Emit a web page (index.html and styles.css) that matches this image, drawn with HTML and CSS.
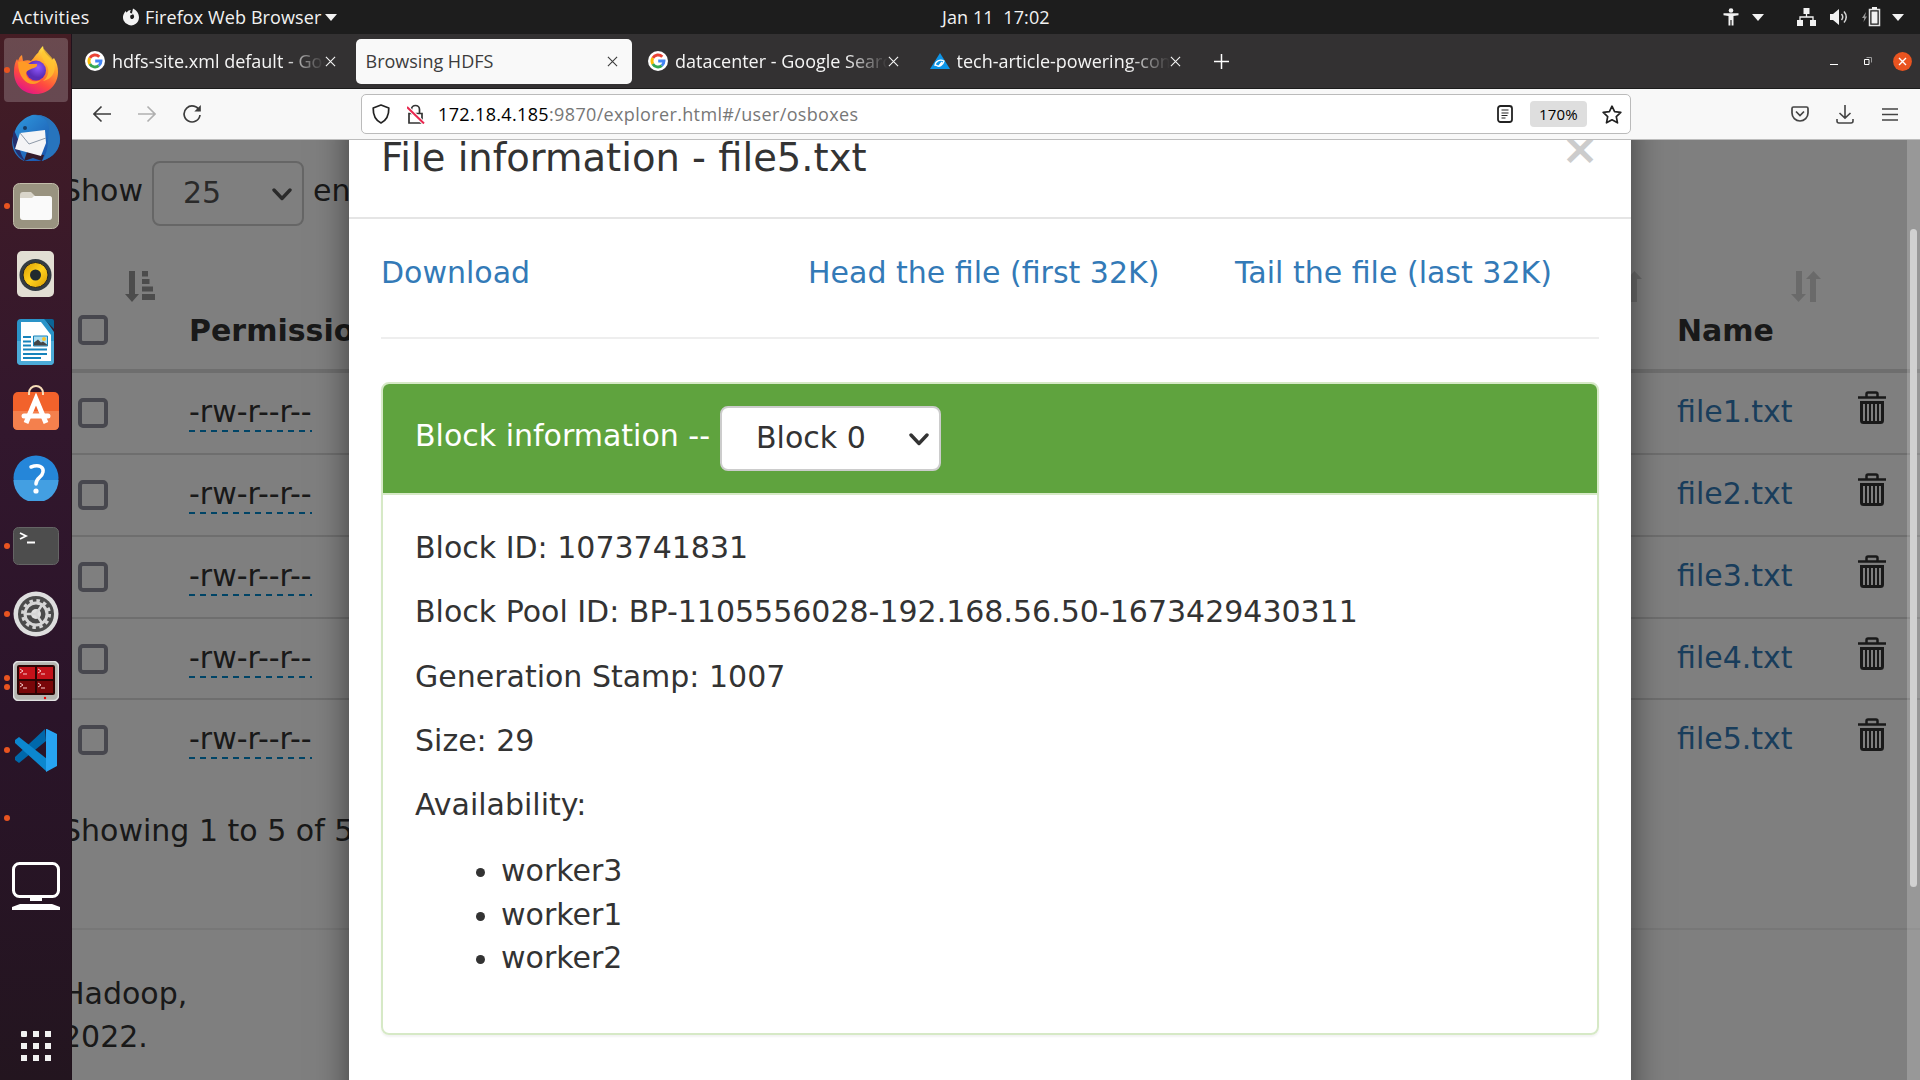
FILE: index.html
```html
<!DOCTYPE html>
<html lang="en">
<head>
<meta charset="utf-8">
<title>Browsing HDFS</title>
<link rel="stylesheet" href="styles.css">
</head>
<body>
<svg width="0" height="0" class="defs">
  <defs>
    <linearGradient id="fox" x1="0.8" y1="0" x2="0.3" y2="1"><stop offset="0" stop-color="#fff44f"/><stop offset=".35" stop-color="#ffa42b"/><stop offset=".7" stop-color="#ff4a3f"/><stop offset="1" stop-color="#e31587"/></linearGradient>
    <radialGradient id="orb" cx=".6" cy=".35"><stop offset="0" stop-color="#9059ff"/><stop offset="1" stop-color="#5b2cb5"/></radialGradient>
    <linearGradient id="bird" x1="0" y1="0" x2="1" y2="1"><stop offset="0" stop-color="#2f9be0"/><stop offset="1" stop-color="#1746a2"/></linearGradient>
    <linearGradient id="yel" x1="0" y1="0" x2="1" y2="1"><stop offset="0" stop-color="#d79a00"/><stop offset=".5" stop-color="#ffd21f"/><stop offset="1" stop-color="#d79a00"/></linearGradient>
    <symbol id="google" viewBox="0 0 20 20"><circle cx="10" cy="10" r="10" fill="#fff"/><g fill="none" stroke-width="2.9"><path d="M14.3 5.8A6 6 0 0 0 4.8 7" stroke="#ea4335"/><path d="M4.8 7a6 6 0 0 0 0 6" stroke="#fbbc05"/><path d="M4.8 13a6 6 0 0 0 9 1.6" stroke="#34a853"/><path d="M13.8 14.6A6 6 0 0 0 16 10h-5.8" stroke="#4285f4"/></g></symbol>
    <symbol id="x" viewBox="0 0 12 12"><path d="M1 1l10 10M11 1L1 11" stroke="currentColor" stroke-width="1.2" fill="none"/></symbol>
    <symbol id="tri" viewBox="0 0 12 7"><path d="M0 0h12L6 7z" fill="#f2f2f2"/></symbol>
    <symbol id="chev" viewBox="0 0 20 13"><path d="M2 2l8 8.5L18 2" fill="none" stroke="currentColor" stroke-width="3.4" stroke-linecap="round" stroke-linejoin="round"/></symbol>
    <symbol id="sort" viewBox="0 0 30 31"><path d="M5 0h6v23h4l-7.5 8L0 23h5zM19 31h6V8h5L22.500 0 15 8h4z" fill="#333"/></symbol>
    <symbol id="trash" viewBox="0 0 28 33"><path d="M0 6.500h28M8.500 6V3q0-1.500 1.500-1.500h8q1.500 0 1.500 1.500v3" fill="none" stroke="#333" stroke-width="2.500"/><path d="M3.500 11.500h21v18q0 2-2 2h-17q-2 0-2-2z" fill="none" stroke="#333" stroke-width="3"/><path d="M8 11v20M12 11v20M16 11v20M20 11v20" stroke="#333" stroke-width="2"/></symbol>
  </defs>
</svg>

<header class="topbar">
  <span class="activities">Activities</span>
  <svg class="app-icon" width="16" height="18" viewBox="0 0 16 18"><path d="M8 2c-1 1-1 2-.7 3l2.700.8c0 1-1.500 1.200-2.500 1.500C6.500 9.500 8 11.500 9.500 11c2-.8 2-3.300.8-4.500L9 5l1-4.500c3.500 1.500 6 5 6 9A8 8 0 1 1 1 5.500L2.500 3l1 1.500C5 2.800 6 2 8 2z" fill="#f2f2f2"/></svg>
  <span class="app-name">Firefox Web Browser</span>
  <svg width="12" height="7"><use href="#tri"/></svg>
  <span class="clock">Jan 11&nbsp; 17:02</span>
  <div class="status">
    <svg width="16" height="18" viewBox="0 0 16 18"><circle cx="8" cy="2.500" r="2.300" fill="#f2f2f2"/><path d="M.5 5.300h15v1.900L10.500 8v9.500H8.600V12H7.400v5.500H5.500V8L.5 7.200z" fill="#f2f2f2"/></svg>
    <svg class="t1" width="12" height="7"><use href="#tri"/></svg>
    <svg class="net" width="19" height="18" viewBox="0 0 19 18"><path d="M6.500 0h6v6h-6zM0 12h6v6H0zM13 12h6v6h-6z" fill="#f2f2f2"/><path d="M9.500 5v4M3 12V9h13v3" fill="none" stroke="#f2f2f2" stroke-width="1.300"/></svg>
    <svg class="vol" width="19" height="16" viewBox="0 0 19 16"><path d="M0 5h3l6-5v16l-6-5H0z" fill="#f2f2f2"/><path d="M11.500 5q2.500 3 0 6M14 2.500q4.500 5.500 0 11" fill="none" stroke="#d5d5d5" stroke-width="1.500"/></svg>
    <svg class="bat" width="19" height="20" viewBox="0 0 19 20"><path d="M4 5L0 11h2.200L1.500 15 5 9.500H3z" fill="#999"/><path d="M7.500 2.500h10v16h-10z" fill="none" stroke="#e5e5e5" stroke-width="1.500"/><path d="M10 0h5v2h-5zM9.500 4.500h6v12h-6z" fill="#f2f2f2"/></svg>
    <svg class="t1" width="12" height="7"><use href="#tri"/></svg>
  </div>
</header>

<div class="desktop">
<nav class="dock">
  <div class="app active"><i></i>
    <svg width="46" height="48" viewBox="0 0 46 48"><path d="M23 48C9 48 1 38 1 26c0-6 1-10 3-13l1 2c1-3 2-5 4-6l1 6c3-1 6-1 8 0 3-3 5-7 7-8 1-3 4-6 5-7 1 8 6 10 9 14l2-2c3 5 4 9 4 14 0 12-9 22-22 22z" fill="url(#fox)"/><circle cx="23" cy="24.500" r="10" fill="url(#orb)"/><path d="M5 16c5-2 8 0 11 2h8c1 3-3 4-6 5-2 1-5 2-5 5 2 7 9 9 15 6-7 9-23 3-23-18z" fill="#ff9a25"/><path d="M26 15c10 0 13 14 4 20 11-2 15-13 9-23L31 3c-4 5-2 9 1 13z" fill="#ffc630" opacity=".75"/></svg></div>
  <div class="app">
    <svg width="48" height="48" viewBox="0 0 48 48"><path d="M12 47C1 42-3 29 3 17 6 8 14 3 20 1c5 0 9 0 13 2 10 4 15 14 15 22 0 10-6 18-18 22z" fill="url(#bird)"/><path d="M2 16C-2 30 4 42 13 47c-4-6-6-12-5-17z" fill="#24306f"/><path d="M12 47l3-9 17 3-2 6-9-3z" fill="#341b2a"/><path d="M8 19l25-3 1 13-5 13L3 35z" fill="#f4f4f6"/><path d="M8 19l9 11 17-6" fill="none" stroke="#8e99a8"/><path d="M20 1c10-1 17 6 17 14-2 10 1 20-7 32 12-4 18-12 18-22C47 12 37-1 20 1z" fill="#2774bd"/><circle cx="13" cy="14" r="2" fill="#173b65"/></svg></div>
  <div class="app"><i></i>
    <svg width="46" height="46" viewBox="0 0 46 46"><rect x=".5" y=".5" width="45" height="45" rx="6" fill="#999380" stroke="#c3bdab"/><path d="M7 12q0-3 3-3h8l4 4h14q3 0 3 3H7z" fill="#d9d5ca"/><path d="M7 15h12l2-2h15q3 0 3 3v18q0 3-3 3H10q-3 0-3-3z" fill="#fafafa"/></svg></div>
  <div class="app">
    <svg width="37" height="46" viewBox="0 0 37 46"><rect width="37" height="46" rx="5" fill="#e2ded3"/><circle cx="18.500" cy="24" r="16" fill="#333b42"/><circle cx="18.500" cy="24" r="12.500" fill="url(#yel)"/><circle cx="18.500" cy="24" r="12.500" fill="none" stroke="#222"/><circle cx="18.500" cy="24" r="5.500" fill="#222a2e"/></svg></div>
  <div class="app">
    <svg width="37" height="46" viewBox="0 0 37 46"><path d="M4 0h24l9 13v29q0 4-4 4H4q-4 0-4-4V4q0-4 4-4z" fill="#2a93c8"/><path d="M0 22h37v20q0 4-4 4H4q-4 0-4-4z" fill="#4cabd8"/><path d="M27 0h8q2 0 2 2v8z" fill="#0b6496"/><path d="M4 3h20l10 13v26H4z" fill="#fff"/><path d="M6 18h8M6 22.500h8M6 26.500h8M6 30.500h24M6 35h24M6 39h18" stroke="#1783bb" stroke-width="2"/><path d="M16.500 17h14v10h-14z" fill="#a7dcf0" stroke="#1783bb"/><path d="M17 26.500v-3l4-3 3 3 2-1 4 3v1z" fill="#444"/><circle cx="27" cy="20" r="2" fill="#f8c42a"/></svg></div>
  <div class="app">
    <svg width="46" height="46" viewBox="0 0 46 46" class="bag"><rect y="8" width="46" height="38" rx="5" fill="#f2622b"/><path d="M0 27h46v14q0 5-5 5H5q-5 0-5-5z" fill="#f4804d"/><path d="M16 11V9a7 7 0 0 1 14 0v2" fill="none" stroke="#f7ddb8" stroke-width="2"/><path d="M13 39l10-24 10 24" fill="none" stroke="#fff" stroke-width="5"/><path d="M11 32h24" stroke="#fff" stroke-width="5" stroke-linecap="round"/></svg></div>
  <div class="app">
    <svg width="46" height="46" viewBox="0 0 46 46"><circle cx="23" cy="23" r="22.500" fill="#2586d9"/><path d="M.5 25h45A22.500 22.500 0 0 1 .5 25z" fill="#439fe2"/><path d="M18 12c8-3 13 0 12 5-1 6-7 5-7 12" fill="none" stroke="#fff" stroke-width="3.500" stroke-linecap="round"/><circle cx="23" cy="36" r="2.600" fill="#fff"/></svg></div>
  <div class="app"><i></i>
    <svg width="46" height="38" viewBox="0 0 46 38"><rect x=".5" y=".5" width="45" height="37" rx="5" fill="#4d4d4d" stroke="#656565"/><path d="M7 6l6 3-6 3M14 15.500h8" fill="none" stroke="#fff" stroke-width="1.800"/></svg></div>
  <div class="app"><i></i>
    <svg width="46" height="46" viewBox="0 0 46 46"><circle cx="23" cy="23" r="22.500" fill="#dedede"/><circle cx="23" cy="23" r="18" fill="#4b4b4b"/><circle cx="23" cy="23" r="13.500" fill="none" stroke="#d6d6d6" stroke-width="3" stroke-dasharray="3.500 3.570"/><circle cx="23" cy="23" r="11" fill="none" stroke="#d6d6d6" stroke-width="3"/><circle cx="23" cy="23" r="5" fill="#e0e0e0"/><path d="M23 23H12M23 23l6-9M23 23l6 9" stroke="#d6d6d6" stroke-width="2.500"/></svg></div>
  <div class="app"><i class="upper"></i><i class="lower"></i>
    <svg class="crt" width="46" height="40" viewBox="0 0 46 40"><rect x=".5" y=".5" width="45" height="39" rx="5" fill="#b5b5b0" stroke="#e2e2e2" stroke-width="1.500"/><rect x="4" y="4" width="38" height="30" rx="2" fill="#2c0505"/><path d="M6 6h16v12H6zM24 6h16v12H24z" fill="#c4121a"/><path d="M6 20h16v12H6zM24 20h16v12H24z" fill="#790709"/><path d="M7 8l3 2-3 2M10 13h4M25 8l3 2-3 2M28 13h4M7 22l3 2-3 2M10 27h4M25 22l3 2-3 2M28 27h4" fill="none" stroke="#f5caca"/><circle cx="32" cy="37" r="1.200" fill="#e00"/></svg></div>
  <div class="app"><i></i>
    <svg width="44" height="44" viewBox="0 0 44 44"><path d="M31 1L1 29v3l4 3L32 13z" fill="#0068aa"/><path d="M1 15v-3l4-3 28 22-1 12z" fill="#0c87cf"/><path d="M31 1l2 0 10 5v32l-11 6V1z" fill="#27a4f2"/></svg></div>
  <div class="app"><i></i></div>
  <div class="app">
    <svg width="48" height="48" viewBox="0 0 48 48"><rect x="1.500" y="1.500" width="45" height="33" rx="6" fill="none" stroke="#fff" stroke-width="3"/><path d="M18 35h12v4H18zM8 42h32l8 3v3H0v-3z" fill="#fff"/></svg></div>
  <svg class="grid" width="30" height="30" viewBox="0 0 30 30"><path d="M1 0h4q1 0 1 1v4q0 1-1 1H1q-1 0-1-1V1q0-1 1-1zM12 0h6v6h-6zM24 0h6v6h-6zM0 12h6v6H0zM12 12h6v6h-6zM24 12h6v6h-6zM0 24h6v6H0zM12 24h6v6h-6zM24 24h6v6h-6z" fill="#f2f2f2"/></svg>
</nav>

<main class="window">
  <div class="tabs">
    <div class="tab"><svg width="20" height="20"><use href="#google"/></svg><span>hdfs-site.xml default - Goo</span><svg class="close" width="11" height="11"><use href="#x"/></svg></div>
    <div class="tab selected"><span>Browsing HDFS</span><svg class="close" width="11" height="11"><use href="#x"/></svg></div>
    <div class="tab"><svg width="20" height="20"><use href="#google"/></svg><span>datacenter - Google Searc</span><svg class="close" width="11" height="11"><use href="#x"/></svg></div>
    <div class="tab"><svg width="20" height="20" viewBox="0 0 20 20"><path d="M10 2l10 16H0z" fill="#0d95e8"/><path d="M5 15c0-5 5-7 9-5-1 4-5 7-8 4M9 15l3-4" fill="none" stroke="#fff" stroke-width="1.300"/></svg><span>tech-article-powering-con</span><svg class="close" width="11" height="11"><use href="#x"/></svg></div>
    <svg class="plus" width="15" height="15" viewBox="0 0 15 15"><path d="M7.500 0v15M0 7.500h15" stroke="#fff" stroke-width="1.500"/></svg>
    <div class="controls">
      <svg width="8" height="9" viewBox="0 0 8 9"><path d="M0 7.500h8" stroke="#fff"/></svg>
      <svg width="8" height="8" viewBox="0 0 8 8"><path d="M.5 2.500h4.500v5H.5z" fill="none" stroke="#fff"/><path d="M2.500.5h5v5" fill="none" stroke="#999"/></svg>
      <svg width="19" height="19" viewBox="0 0 19 19"><circle cx="9.500" cy="9.500" r="9.400" fill="#e95420"/><path d="M6 6l7 7M13 6l-7 7" stroke="#fff" stroke-width="1.400"/></svg>
    </div>
  </div>

  <div class="toolbar">
    <div class="nav">
      <svg width="18" height="18" viewBox="0 0 18 18"><path d="M18 9H1M8.500 1.500L1 9l7.500 7.500" fill="none" stroke="#3c3c3c" stroke-width="1.600"/></svg>
      <svg width="18" height="18" viewBox="0 0 18 18"><path d="M0 9h17M9.500 1.500L17 9l-7.500 7.500" fill="none" stroke="#b0b0b0" stroke-width="1.600"/></svg>
      <svg width="18" height="18" viewBox="0 0 18 18"><path d="M16.500 6A8 8 0 1 0 17 10" fill="none" stroke="#3c3c3c" stroke-width="1.700"/><path d="M17.800 0v6.500h-6.500z" fill="#3c3c3c"/></svg>
    </div>
    <div class="urlbar">
      <svg width="18" height="20" viewBox="0 0 18 20"><path d="M9 1l7.800 3C17 11 15 16 9 19 3 16 1 11 1.200 4z" fill="none" stroke="#222" stroke-width="1.700" stroke-linejoin="round"/></svg>
      <svg class="lock" width="18" height="20" viewBox="0 0 18 20"><path d="M2 9.500h13v9.500H2zM4.500 9V5.500a4 4 0 0 1 8 0V9" fill="none" stroke="#333" stroke-width="1.700"/><path d="M0 3l17 16.500" stroke="#fff" stroke-width="4"/><path d="M0 3l17 16.500" stroke="#e8284f" stroke-width="2"/></svg>
      <span class="url"><b>172.18.4.185</b>:9870/explorer.html#/user/osboxes</span>
      <svg class="reader" width="16" height="18" viewBox="0 0 16 18"><rect x="1" y="1" width="14" height="16" rx="2.500" fill="none" stroke="#222" stroke-width="1.800"/><path d="M4.500 5h7M4.500 8h7M4.500 10.500h6M4.500 13h4" stroke="#222" stroke-width="1.100"/></svg>
      <span class="zoom">170%</span>
      <svg width="20" height="19" viewBox="0 0 20 19"><path d="M10 1.200l2.600 5.500 6.200.7-4.500 4.200 1.200 6.200-5.500-3-5.500 3 1.200-6.200L1.200 7.400l6.200-.7z" fill="none" stroke="#222" stroke-width="1.700" stroke-linejoin="round"/></svg>
    </div>
    <div class="tools">
      <svg width="18" height="16" viewBox="0 0 18 16"><path d="M2.500 1h13Q17 1 17 2.500V7a8 8 0 0 1-16 0V2.500Q1 1 2.500 1z" fill="none" stroke="#444" stroke-width="1.700"/><path d="M5 5.500l4 4 4-4" fill="none" stroke="#444" stroke-width="1.700"/></svg>
      <svg width="18" height="19" viewBox="0 0 18 19"><path d="M9 0v13M3.500 8L9 13.200 14.500 8M1 14v2q0 2 2 2h12q2 0 2-2v-2" fill="none" stroke="#444" stroke-width="1.600"/></svg>
      <svg width="16" height="13" viewBox="0 0 16 13"><path d="M0 1h16M0 6.500h16M0 12h16" stroke="#444" stroke-width="1.600"/></svg>
    </div>
  </div>

  <div class="viewport">
    <div class="page">
      <div class="length"><span>Show</span><div class="select small">25<svg width="20" height="13"><use href="#chev"/></svg></div><span>entries</span></div>
      <div class="row head">
        <span class="box"></span>
        <svg class="sorted" width="30" height="31" viewBox="0 0 30 31"><path d="M4 0h6v23h4L7 31 0 23h4zM17 0h6v5.500h-6zM17 8h7.500v5H17zM17 15.500h11v5H17zM17 23h13v6H17z" fill="#333"/></svg>
        <b class="perm">Permission</b>
        <svg class="sort" width="30" height="31"><use href="#sort"/></svg>
        <b class="file">Name</b>
        <svg class="sort last" width="30" height="31"><use href="#sort"/></svg>
      </div>
      <div class="row first"><span class="box"></span><span class="perm"><u>-rw-r--r--</u></span><a class="file">file1.txt</a><svg width="28" height="33"><use href="#trash"/></svg></div>
      <div class="row"><span class="box"></span><span class="perm"><u>-rw-r--r--</u></span><a class="file">file2.txt</a><svg width="28" height="33"><use href="#trash"/></svg></div>
      <div class="row"><span class="box"></span><span class="perm"><u>-rw-r--r--</u></span><a class="file">file3.txt</a><svg width="28" height="33"><use href="#trash"/></svg></div>
      <div class="row"><span class="box"></span><span class="perm"><u>-rw-r--r--</u></span><a class="file">file4.txt</a><svg width="28" height="33"><use href="#trash"/></svg></div>
      <div class="row"><span class="box"></span><span class="perm"><u>-rw-r--r--</u></span><a class="file">file5.txt</a><svg width="28" height="33"><use href="#trash"/></svg></div>
      <p class="showing">Showing 1 to 5 of 5 entries</p>
      <footer>Hadoop,<br>2022.</footer>
    </div>
    <div class="backdrop"></div>
    <section class="modal">
      <div class="modal-head"><h4>File information - file5.txt</h4><span class="dismiss">×</span></div>
      <div class="modal-body">
        <div class="links"><a>Download</a><a>Head the file (first 32K)</a><a>Tail the file (last 32K)</a></div>
        <hr>
        <div class="panel">
          <div class="panel-head"><span>Block information --</span><div class="select">Block 0<svg width="20" height="13"><use href="#chev"/></svg></div></div>
          <div class="panel-body">
            <p>Block ID: 1073741831</p>
            <p>Block Pool ID: BP-1105556028-192.168.56.50-1673429430311</p>
            <p>Generation Stamp: 1007</p>
            <p>Size: 29</p>
            <p>Availability:</p>
            <ul><li>worker3</li><li>worker1</li><li>worker2</li></ul>
          </div>
        </div>
      </div>
    </section>
    <div class="scrollbar"><div class="thumb"></div></div>
  </div>
</main>
</div>
</body>
</html>
```
FILE: styles.css
```css
* { box-sizing: border-box; }
body {
  margin: 0; width: 1920px; height: 1080px; overflow: hidden;
  display: flex; flex-direction: column;
  font-family: "Open Sans", "Noto Sans", sans-serif; font-size: 18px;
}
svg { display: block; flex: none; }
.defs { position: absolute; }

/* System bar */
.topbar {
  position: relative; height: 34px; flex: none; background: #1d1d1d; color: #f2f2f2;
  display: flex; align-items: center; padding: 0 16px 0 12px; white-space: nowrap;
}
.activities { width: 111px; letter-spacing: .35px; }
.app-name { width: 173px; margin: 0 7px 0 6px; letter-spacing: .1px; }
.clock { position: absolute; left: 942px; letter-spacing: .1px; }
.status { margin-left: auto; display: flex; align-items: center; }
.status .t1 { margin-left: 13px; }
.status .net { margin-left: 33px; }
.status .vol { margin-left: 14px; }
.status .bat { margin-left: 13px; margin-right: -2px; }

.desktop { flex: 1; display: flex; min-height: 0; }

/* Dock */
.dock {
  width: 72px; flex: none; padding: 2px 0 19px; display: flex; flex-direction: column; align-items: center;
  background: linear-gradient(#451d24 0, #3f1b27 10%, #32172d 38%, #2a1429 65%, #23151f 100%);
  border-right: 1px solid #20121c;
}
.app { position: relative; width: 100%; height: 68px; flex: none; display: flex; align-items: center; justify-content: center; }
.app.active::before { content: ""; position: absolute; inset: 2px 3px 2px 4px; border-radius: 4px; background: rgba(255,255,255,.2); }
.app svg { position: relative; }
.app .bag { margin-top: -6px; }
.app .crt { margin-top: -2px; }
.app i { position: absolute; left: 4px; top: 31px; width: 6px; height: 6px; border-radius: 50%; background: #e95420; }
.app .upper { top: 27px; }
.app .lower { top: 36px; }
.dock .grid { margin-top: auto; }

/* Browser frame */
.window { flex: 1; min-width: 0; display: flex; flex-direction: column; }
.tabs { height: 55px; flex: none; background: #333132; border-bottom: 1px solid #1c1c1c; display: flex; align-items: center; padding: 0 8px 0 2px; gap: 5.500px; color: #f5f5f5; }
.tab { width: 276px; height: 45px; flex: none; padding: 0 14px 0 11px; display: flex; align-items: center; border-radius: 5px; }
.tab span { flex: 1; min-width: 0; overflow: hidden; white-space: nowrap; }
.tab svg + span { margin-left: 7px; -webkit-mask-image: linear-gradient(90deg, #000 calc(100% - 42px), transparent); mask-image: linear-gradient(90deg, #000 calc(100% - 42px), transparent); }
.tab.selected { background: #f9f9f9; color: #3c3c3c; padding-left: 10px; }
.plus { margin-left: 14px; }
.controls { margin-left: auto; display: flex; align-items: center; }
.controls svg + svg { margin-left: 26px; }
.controls svg:last-child { margin-left: 21px; }
.toolbar { height: 51px; flex: none; background: #f8f8f8; border-bottom: 1px solid #bdbdbd; display: flex; align-items: center; padding: 0 22px 0 21px; }
.nav { display: flex; gap: 27px; width: 268px; }
.urlbar { width: 1270px; height: 40px; background: #fff; border: 1px solid #bbb; border-radius: 5px; display: flex; align-items: center; padding: 0 8px 0 10px; }
.lock { margin-left: 17px; }
.url { margin-left: 13px; color: #777; letter-spacing: .35px; }
.url b { font-weight: normal; color: #000; }
.reader { margin-left: auto; }
.zoom { width: 57px; height: 26px; line-height: 27px; margin: 0 15px 0 17px; border-radius: 4px; background: #dedede; text-align: center; font-size: 15px; letter-spacing: .2px; }
.tools { margin-left: auto; display: flex; align-items: center; gap: 27px; }
.tools svg:last-child { margin-left: 1px; }

/* Page */
.viewport { position: relative; flex: 1; overflow: hidden; background: #fff; color: #333; font: 30px/43px "DejaVu Sans", sans-serif; }
.page { margin-left: -10px; padding-top: 21px; width: 1858px; }
.length { display: flex; height: 65px; }
.length > span { padding-top: 8px; width: 90px; }
.length > span:last-child { margin-left: 9px; }
.select { height: 65px; width: 221px; border: 2px solid #ccc; border-radius: 8px; background: #fff; display: flex; align-items: center; justify-content: space-between; padding: 0 10px 2px 34px; color: #333; }
.select svg { margin-top: 4px; }
.select.small { width: 152px; padding-left: 29px; color: #555; }
.row { height: 81.75px; border-top: 2px solid #ddd; padding: 17px 0 0 16px; display: flex; }
.row.first { border-top-width: 4px; height: 84px; }
.box { width: 30px; height: 30px; margin-top: 8px; border: 4px solid #8f8f9d; border-radius: 5px; flex: none; }
.perm { margin-left: 81px; width: 1488px; flex: none; }
.perm u { display: inline-block; height: 42px; text-decoration: none; background: repeating-linear-gradient(90deg, #08c 0 6px, transparent 6px 11px) 0 100% / 100% 2px no-repeat; }
.file { width: 181px; flex: none; color: #337ab7; }
.row > svg { margin-top: 1px; }
.head { height: 143px; border: 0; padding-top: 83px; }
.head .box { margin-top: 6px; }
.row.head > svg { margin-top: -38px; opacity: .5; }
.row.head > .sorted { margin-left: 17px; }
.head .perm { margin-left: 34px; width: 1423px; }
.row.head > .sort { opacity: .2; }
.head .file { margin-left: 35px; width: 114px; color: #333; }
.showing { margin: 29px 0 0; height: 119px; }
footer { border-top: 2px solid #eee; padding-top: 42px; }
.backdrop { position: absolute; inset: 0; background: rgba(0,0,0,.5); }

/* Dialog over the page */
.modal { position: absolute; left: 277px; top: -42px; width: 1282px; height: 1100px; background: #fff; box-shadow: 0 11px 32px rgba(0,0,0,.5); }
.modal-head { height: 121px; padding: 32px 32px 0 32px; border-bottom: 2px solid #e5e5e5; display: flex; justify-content: space-between; }
h4 { margin: 0; font-size: 38.500px; line-height: 55px; font-weight: normal; }
.dismiss { margin-top: -4px; font-size: 45px; line-height: 45px; font-weight: bold; color: #ccc; }
.modal-body { padding: 32px; }
.links { display: grid; grid-template-columns: 427px 427px 1fr; white-space: nowrap; }
a { color: #337ab7; }
hr { border: 0; height: 2px; background: #eee; margin: 43px 0; }
.panel { border: 2px solid #d6e9c6; border-radius: 8px; height: 653px; overflow: hidden; box-shadow: 0 2px 2px rgba(0,0,0,.05); }
.panel-head { background: #5fa33e; border-bottom: 2px solid #d6e9c6; height: 111px; padding: 22px 32px; display: flex; gap: 10px; color: #fff; }
.panel-head > span { padding-top: 8px; }
.panel-body { padding: 31px 32px; }
.panel-body p { margin: 0 0 21.250px; }
ul { margin: 0; padding: 2px 0 0 86px; line-height: 43.500px; }

.scrollbar { position: absolute; right: 0; top: 0; width: 13px; height: 100%; background: rgba(255,255,255,.2); padding: 89px 3px 0; }
.thumb { height: 658px; border-radius: 4px; background: #d1d1d1; }
```
